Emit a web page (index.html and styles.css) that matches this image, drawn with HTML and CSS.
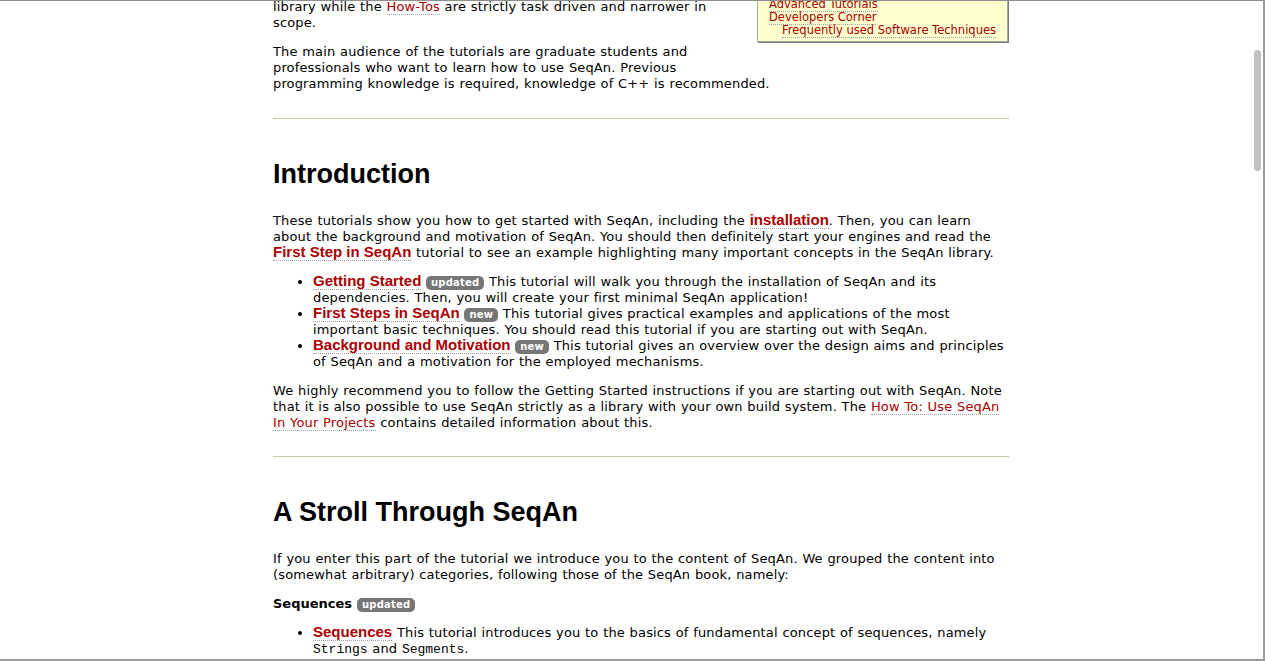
FILE: index.html
```html
<!DOCTYPE html>
<html lang="en">
<head>
<meta charset="utf-8">
<title>SeqAn Tutorials</title>
<link rel="stylesheet" href="styles.css">
</head>
<body>
<div class="page">
  <div class="toc">
    <ul class="toc-list">
      <li><a href="#">Advanced Tutorials</a></li>
      <li><a href="#">Developers Corner</a>
        <ul class="toc-sub">
          <li><a href="#">Frequently used Software Techniques</a></li>
        </ul>
      </li>
    </ul>
  </div>

  <p class="lead-cut">library while the <a href="#">How-Tos</a> are strictly task driven and narrower in scope.</p>
  <p>The main audience of the tutorials are graduate students and professionals who want to learn how to use SeqAn. Previous programming knowledge is required, knowledge of C++ is recommended.</p>

  <hr class="rule">

  <h2 class="section-title">Introduction</h2>
  <p>These tutorials show you how to get started with SeqAn, including the <a class="strong" href="#">installation</a>. Then, you can learn about the background and motivation of SeqAn. You should then definitely start your engines and read the <a class="strong" href="#">First Step in SeqAn</a> tutorial to see an example highlighting many important concepts in the SeqAn library.</p>
  <ul class="tut-list">
    <li><a class="strong" href="#">Getting Started</a> <span class="badge">updated</span> This tutorial will walk you through the installation of SeqAn and its dependencies. Then, you will create your first minimal SeqAn application!</li>
    <li><a class="strong" href="#">First Steps in SeqAn</a> <span class="badge">new</span> This tutorial gives practical examples and applications of the most important basic techniques. You should read this tutorial if you are starting out with SeqAn.</li>
    <li><a class="strong" href="#">Background and Motivation</a> <span class="badge">new</span> This tutorial gives an overview over the design aims and principles of SeqAn and a motivation for the employed mechanisms.</li>
  </ul>
  <p>We highly recommend you to follow the Getting Started instructions if you are starting out with SeqAn. Note that it is also possible to use SeqAn strictly as a library with your own build system. The <a href="#">How To: Use SeqAn In Your Projects</a> contains detailed information about this.</p>

  <hr class="rule">

  <h2 class="section-title">A Stroll Through SeqAn</h2>
  <p>If you enter this part of the tutorial we introduce you to the content of SeqAn. We grouped the content into (somewhat arbitrary) categories, following those of the SeqAn book, namely:</p>
  <h4 class="group-title">Sequences <span class="badge">updated</span></h4>
  <ul class="tut-list">
    <li><a class="strong" href="#">Sequences</a> This tutorial introduces you to the basics of fundamental concept of sequences, namely <code>Strings</code> and <code>Segments</code>.</li>
    <li><a class="strong" href="#">Alphabets</a> This tutorial introduces you to SeqAn's alphabets, or in other words, the contained types of sequences.</li>
  </ul>
</div>

<div class="window-frame">
  <div class="scroll-thumb"></div>
</div>
</body>
</html>
```

FILE: styles.css
```css
html, body {
  margin: 0;
  padding: 0;
  overflow: hidden;
  height: 100%;
  background: #ffffff;
}

body {
  font-family: "DejaVu Sans", Verdana, sans-serif;
  font-size: 13px;
  letter-spacing: 0.15px;
  word-spacing: 0.4px;
  line-height: 16px;
  color: #000000;
}

.page {
  box-sizing: border-box;
  width: 753px;
  margin: -1px auto 0;
  padding-left: 17px;
}

a {
  color: #aa0000;
  text-decoration: none;
  border-bottom: 1px dotted #a0a0a0;
}

a.strong {
  font-family: "Liberation Sans", Arial, Helvetica, sans-serif;
  font-weight: bold;
  font-size: 15px;
  letter-spacing: 0;
  word-spacing: 0;
  line-height: 12px;
}

p {
  margin: 13px 0;
}

.lead-cut {
  margin-top: 0;
}

.toc {
  float: right;
  box-sizing: border-box;
  width: 251px;
  margin: -1px 1px 25px 20px;
  padding: 0 4px 4px 11px;
  background: #ffffd0;
  border: 1px solid #a8a8a0;
  border-top: none;
  box-shadow: 1px 1px 0 #7a7a7a;
  font-size: 11.5px;
  letter-spacing: 0;
  word-spacing: 0;
  line-height: 13px;
  white-space: nowrap;
}

.toc-list,
.toc-sub {
  list-style: none;
  margin: 0;
  padding: 0;
}

.toc-sub {
  padding-left: 13px;
}

.toc a {
  color: #aa0000;
}

.rule {
  border: none;
  border-top: 1px solid #c8c8b2;
  margin: 25px 0 0;
  height: 0;
}

.page > p:nth-of-type(2) + .rule {
  margin-top: 26px;
}

.section-title {
  font-family: "Liberation Sans", Arial, Helvetica, sans-serif;
  font-size: 27px;
  letter-spacing: 0;
  word-spacing: 0;
  line-height: 34px;
  font-weight: bold;
  margin: 38px 0 22px;
}

.group-title {
  font-size: 13px;
  letter-spacing: 0;
  line-height: 16px;
  font-weight: bold;
  margin: 13px 0;
}

.tut-list {
  margin: 13px 0;
  padding-left: 40px;
}

.badge {
  display: inline-block;
  height: 14px;
  padding: 0 5px;
  border-radius: 5px;
  background: #767676;
  color: #ffffff;
  font-size: 10px;
  letter-spacing: 0.2px;
  word-spacing: 0;
  line-height: 14px;
  font-weight: bold;
  vertical-align: baseline;
}

code {
  font-family: "Liberation Mono", "Courier New", monospace;
  font-size: 13px;
  letter-spacing: 0;
}

.window-frame {
  position: fixed;
  inset: 0;
  pointer-events: none;
  border-top: 1px solid #8e8e8e;
  border-right: 2px solid #9c9c9c;
  border-bottom: 2px solid #9c9c9c;
}

.scroll-thumb {
  position: absolute;
  top: 49px;
  right: 2px;
  width: 7px;
  height: 121px;
  border-radius: 4px;
  background: #c1c1c1;
}
```
